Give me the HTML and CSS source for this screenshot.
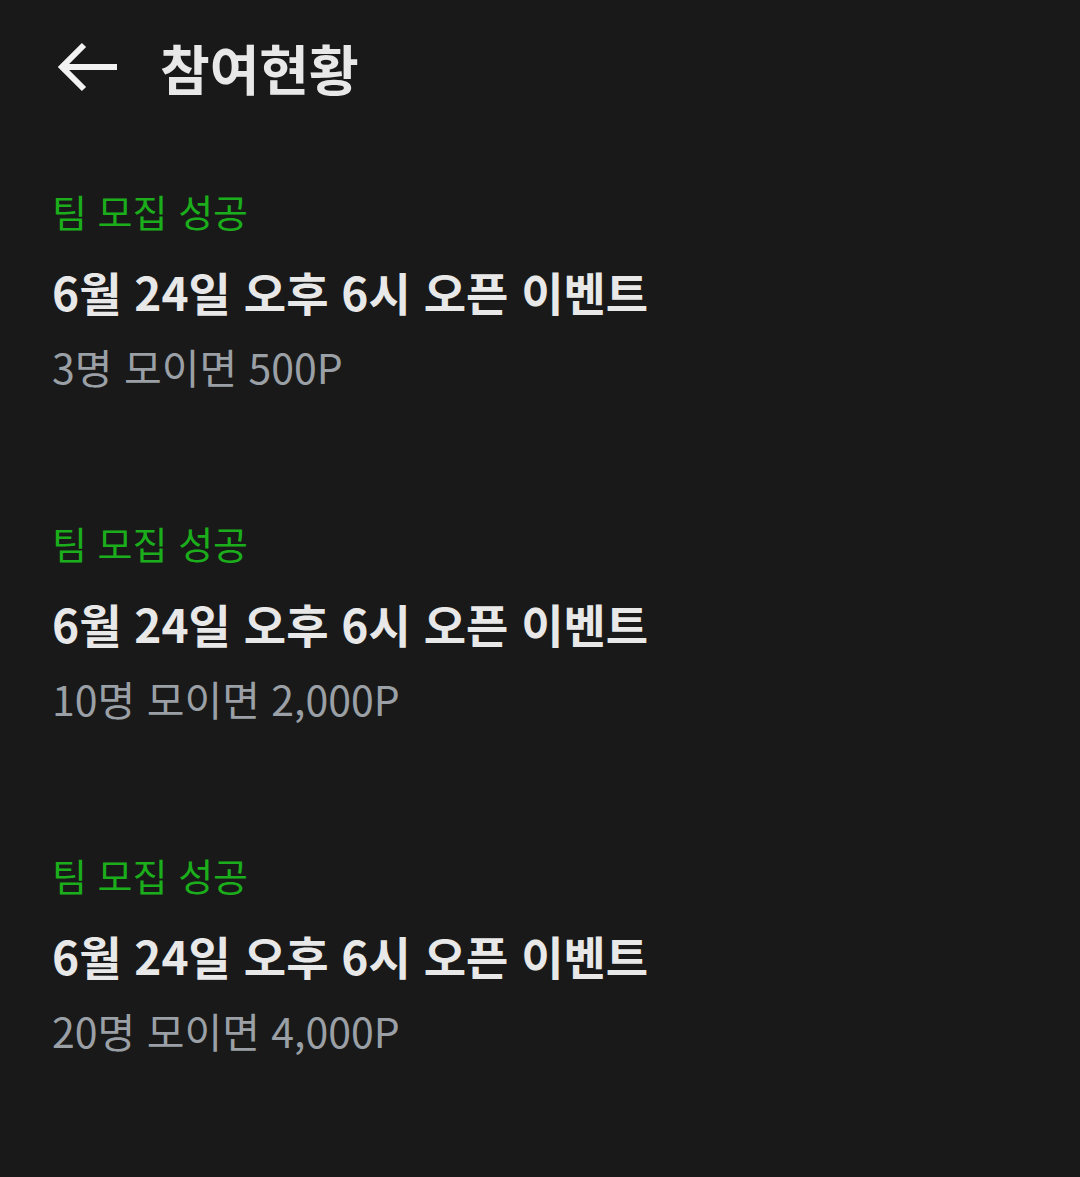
FILE: index.html
```html
<!DOCTYPE html>
<html lang="ko">
<head>
    <meta charset="UTF-8">
    <meta name="viewport" content="width=device-width, initial-scale=1.0">
    <title>참여현황</title>
    <link rel="stylesheet" href="styles.css">
</head>
<body>
    <header class="top-bar">
        <button class="back-btn" aria-label="뒤로">
            <svg width="62" height="52" viewBox="0 0 62 52">
                <path d="M61 26H6M28 4L6 26l22 22" fill="none" stroke="#f2f2f2" stroke-width="6" stroke-linecap="butt" stroke-linejoin="miter"/>
            </svg>
        </button>
        <h1 class="page-title">참여현황</h1>
    </header>

    <ul class="event-list">
        <li class="event-item">
            <p class="status">팀 모집 성공</p>
            <p class="event-name">6월 24일 오후 6시 오픈 이벤트</p>
            <p class="reward">3명 모이면 500P</p>
        </li>
        <li class="event-item">
            <p class="status">팀 모집 성공</p>
            <p class="event-name">6월 24일 오후 6시 오픈 이벤트</p>
            <p class="reward">10명 모이면 2,000P</p>
        </li>
        <li class="event-item">
            <p class="status">팀 모집 성공</p>
            <p class="event-name">6월 24일 오후 6시 오픈 이벤트</p>
            <p class="reward">20명 모이면 4,000P</p>
        </li>
    </ul>
</body>
</html>
```

FILE: styles.css
```css
body {
    margin: 0;
    background-color: #191919;
    font-family: "Noto Sans CJK KR", "Noto Sans", sans-serif;
    color: #e8e8e8;
}
.top-bar {
    display: flex;
    align-items: center;
    height: 134px;
    padding-left: 56px;
}
.back-btn {
    background: none;
    border: none;
    padding: 0;
    display: flex;
    margin-right: 42px;
    cursor: pointer;
}
.page-title {
    margin: 0;
    font-size: 54px;
    font-weight: 700;
    color: #e8e8e8;
}
.event-list {
    list-style: none;
    margin: 0;
    padding: 52px 0 0 52px;
}
.event-item {
    height: 332px;
}
.event-item p {
    margin: 0;
}
.status {
    font-size: 38px;
    line-height: 50px;
    color: #1bad1b;
}
.event-name {
    margin-top: 25px !important;
    font-size: 46px;
    font-weight: 700;
    line-height: 60px;
}
.reward {
    margin-top: 19px !important;
    font-size: 41px;
    line-height: 52px;
    color: #9aa0a6;
}
```
